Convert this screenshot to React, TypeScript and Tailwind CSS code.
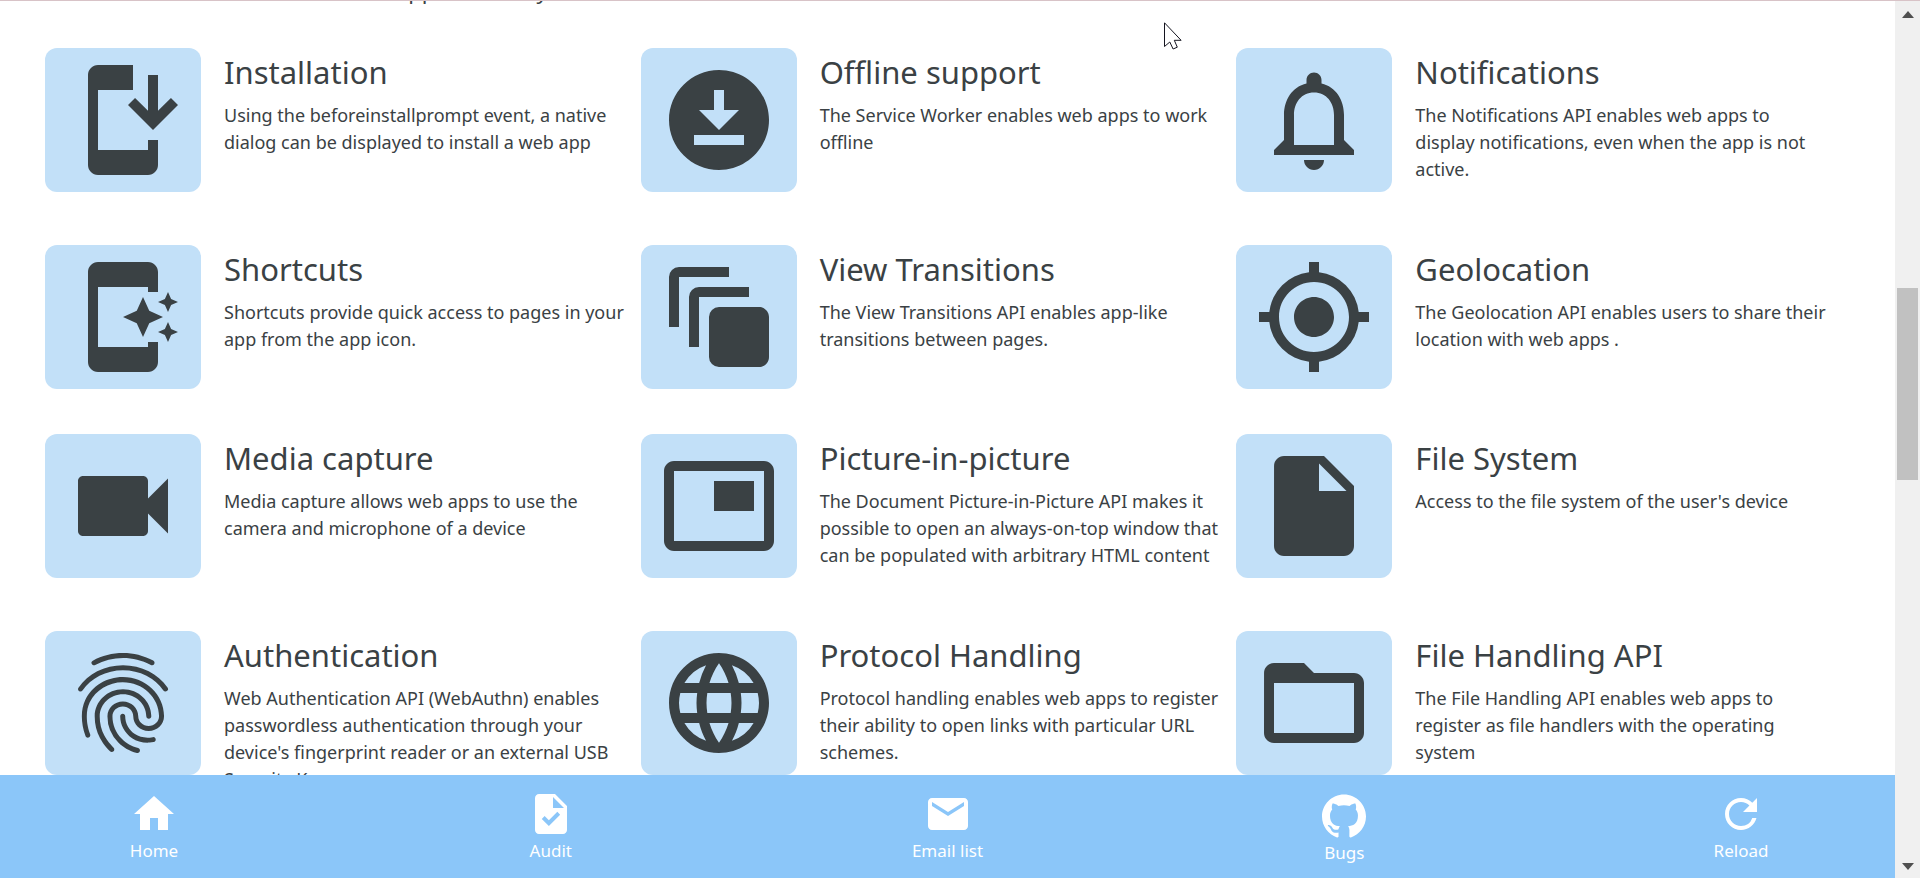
import type { ReactNode } from "react";
import type { IconType } from "react-icons";
import {
  MdAppShortcut,
  MdAutoAwesomeMotion,
  MdDownloadForOffline,
  MdEmail,
  MdFingerprint,
  MdFolderOpen,
  MdHome,
  MdInsertDriveFile,
  MdInstallMobile,
  MdLanguage,
  MdMyLocation,
  MdNotificationsNone,
  MdPictureInPicture,
  MdRefresh,
  MdTask,
  MdVideocam,
} from "react-icons/md";
import { SiGithub } from "react-icons/si";

type Feature = { title: string; icon: IconType; lines: string[] };

const features: Feature[] = [
  {
    title: "Installation",
    icon: MdInstallMobile,
    lines: ["Using the beforeinstallprompt event, a native", "dialog can be displayed to install a web app"],
  },
  {
    title: "Offline support",
    icon: MdDownloadForOffline,
    lines: ["The Service Worker enables web apps to work", "offline"],
  },
  {
    title: "Notifications",
    icon: MdNotificationsNone,
    lines: ["The Notifications API enables web apps to", "display notifications, even when the app is not", "active."],
  },
  {
    title: "Shortcuts",
    icon: MdAppShortcut,
    lines: ["Shortcuts provide quick access to pages in your", "app from the app icon."],
  },
  {
    title: "View Transitions",
    icon: MdAutoAwesomeMotion,
    lines: ["The View Transitions API enables app-like", "transitions between pages."],
  },
  {
    title: "Geolocation",
    icon: MdMyLocation,
    lines: ["The Geolocation API enables users to share their", "location with web apps ."],
  },
  {
    title: "Media capture",
    icon: MdVideocam,
    lines: ["Media capture allows web apps to use the", "camera and microphone of a device"],
  },
  {
    title: "Picture-in-picture",
    icon: MdPictureInPicture,
    lines: [
      "The Document Picture-in-Picture API makes it",
      "possible to open an always-on-top window that",
      "can be populated with arbitrary HTML content",
    ],
  },
  {
    title: "File System",
    icon: MdInsertDriveFile,
    lines: ["Access to the file system of the user's device"],
  },
  {
    title: "Authentication",
    icon: MdFingerprint,
    lines: [
      "Web Authentication API (WebAuthn) enables",
      "passwordless authentication through your",
      "device's fingerprint reader or an external USB",
      "Security Key.",
    ],
  },
  {
    title: "Protocol Handling",
    icon: MdLanguage,
    lines: [
      "Protocol handling enables web apps to register",
      "their ability to open links with particular URL",
      "schemes.",
    ],
  },
  {
    title: "File Handling API",
    icon: MdFolderOpen,
    lines: ["The File Handling API enables web apps to", "register as file handlers with the operating", "system"],
  },
];

function FeatureItem({ title, icon: Icon, lines }: Feature) {
  return (
    <li className="flex items-start gap-[23px]">
      <div className="shrink-0 rounded-xl bg-[#c2e0f8] px-[18px] py-3 text-[#3a4144]">
        <Icon className="size-[120px]" aria-hidden="true" />
      </div>
      <div className="pb-[17px] whitespace-nowrap">
        <h2 className="pb-1.5 text-[31px] leading-[48px]">{title}</h2>
        <p className="text-[18px] leading-[27px]">
          {lines.map((line, i) => (
            <span key={line}>
              {i > 0 && <br />}
              {line}
            </span>
          ))}
        </p>
      </div>
    </li>
  );
}

function NavItem({ label, children }: { label: string; children: ReactNode }) {
  return (
    <a href="#" className="flex w-24 flex-col items-center text-[17px] leading-[26px]">
      {children}
      <span>{label}</span>
    </a>
  );
}

function ScrollBar() {
  return (
    <div className="flex w-[25px] shrink-0 flex-col items-center bg-[#f0f0f0]" aria-hidden="true">
      <svg className="mt-2.5 h-[7px] w-3" viewBox="0 0 12 7" fill="#505050">
        <path d="M6 0 12 7H0z" />
      </svg>
      <div className="grow-[270]" />
      <div className="w-[21px] grow-[192] bg-[#c1c1c1]" />
      <div className="grow-[383]" />
      <svg className="mb-2 h-[7px] w-3" viewBox="0 0 12 7" fill="#505050">
        <path d="M6 7 12 0H0z" />
      </svg>
    </div>
  );
}

export default function App() {
  return (
    <div className="relative flex h-screen flex-col overflow-hidden border-t border-[#d8c3c7] bg-white font-['Noto_Sans',sans-serif] text-[#3a4144]">
      <div className="flex min-h-0 grow">
        <div className="flex min-w-0 grow flex-col">
          <main className="min-h-0 grow overflow-hidden pr-[63px] pl-[45px]">
            <div className="flex h-[47px] flex-col overflow-hidden">
              <p className="-mt-[27px] pl-[351px] text-[22px] leading-[33px] whitespace-nowrap">app constantly</p>
            </div>
            <ul className="grid grid-cols-3 gap-y-[45px]">
              {features.map((feature) => (
                <FeatureItem key={feature.title} {...feature} />
              ))}
            </ul>
          </main>
          <nav className="flex h-[103px] shrink-0 justify-between bg-[#8bc6f9] px-[106px] pt-[15px] text-white">
            <NavItem label="Home">
              <MdHome className="size-12" aria-hidden="true" />
            </NavItem>
            <NavItem label="Audit">
              <MdTask className="size-12" aria-hidden="true" />
            </NavItem>
            <NavItem label="Email list">
              <MdEmail className="size-12" aria-hidden="true" />
            </NavItem>
            <NavItem label="Bugs">
              <SiGithub className="mt-1 mb-0.5 size-11" aria-hidden="true" />
            </NavItem>
            <NavItem label="Reload">
              <MdRefresh className="size-12" aria-hidden="true" />
            </NavItem>
          </nav>
        </div>
        <ScrollBar />
      </div>
      <svg className="absolute top-[21px] left-[1164px] h-7 w-[18px]" viewBox="0 0 18 28" aria-hidden="true">
        <path d="M.5 .8V24.500l5.300-4.500 3.300 7 4.200-1.800-3-6.900h6.800z" fill="#fff" stroke="#14141f" strokeWidth="1" />
      </svg>
    </div>
  );
}
